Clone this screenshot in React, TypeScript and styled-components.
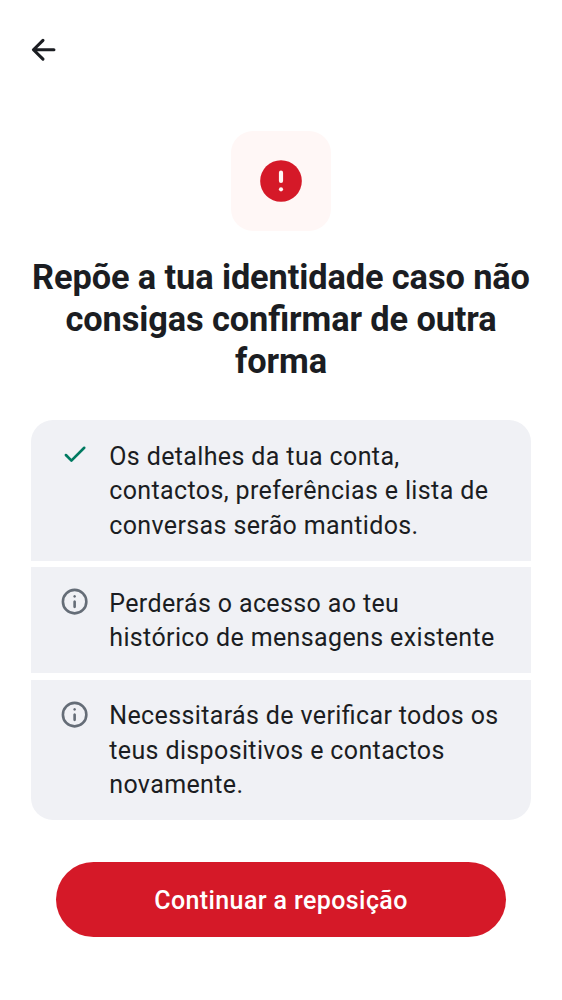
import React from "react";
import styled, { createGlobalStyle } from "styled-components";

const GlobalStyle = createGlobalStyle`
  * { box-sizing: border-box; }
  body { margin: 0; background: #fff; color: #1b1d22; font-family: Roboto, sans-serif; }
`;
const Screen = styled.main`
  width: 562px;
  height: 1000px;
  display: flex;
  flex-direction: column;
  align-items: center;
  background: #fff;
  overflow: hidden;
`;
const TopBar = styled.header`
  width: 100%;
  height: 131px;
  flex: none;
  padding: 31px 0 0 25px;
`;
const BackButton = styled.button`
  display: block;
  width: 37.5px;
  height: 37.5px;
  padding: 0;
  border: 0;
  background: none;
  color: #1b1d22;
`;
const IconTile = styled.div`
  width: 100px;
  height: 100px;
  flex: none;
  border-radius: 22px;
  background: #fff7f6;
  display: grid;
  place-items: center;
`;
const Title = styled.h1`
  margin: 25px 0 0;
  height: 126px;
  flex: none;
  font-size: 34.375px;
  line-height: 42px;
  font-weight: 700;
  letter-spacing: -0.11px;
  font-feature-settings: "liga" 1;
  text-align: center;
  white-space: nowrap;
`;
const List = styled.ul`
  width: 500px;
  flex: none;
  margin: 38.3px 0 0;
  padding: 0;
  list-style: none;
  display: flex;
  flex-direction: column;
  gap: 6.25px;
`;
const Item = styled.li`
  display: flex;
  gap: 19px;
  padding: 19.6px 0 17.9px 28px;
  background: #f0f1f5;
  font-size: 25px;
  line-height: 34.375px;
  letter-spacing: 0.37px;
  font-feature-settings: "liga" 1;
  white-space: nowrap;
  &:first-child { border-radius: 22px 22px 0 0; }
  &:last-child { border-radius: 0 0 22px 22px; }
  svg { flex: none; margin-top: -0.7px; }
`;
const Action = styled.button`
  width: 450px;
  height: 75px;
  flex: none;
  margin-top: 42.2px;
  padding: 1px 0 0;
  border: 0;
  border-radius: 38px;
  background: #d51928;
  color: #fff;
  font: 500 25px Roboto, sans-serif;
  letter-spacing: 0.39px;
`;

const Info = () => (
  <svg width="31.25" height="31.25" viewBox="0 0 24 24" fill="#656d77">
    <path d="M11.29 16.71q.29.29.71.29t.71-.29.29-.71v-4q0-.42-.29-.71A.97.97 0 0 0 12 11a.97.97 0 0 0-.71.29A.97.97 0 0 0 11 12v4q0 .42.29.71m0-8q.29.29.71.29t.71-.29A.97.97 0 0 0 13 8a.97.97 0 0 0-.29-.71A.97.97 0 0 0 12 7a.97.97 0 0 0-.71.29A.97.97 0 0 0 11 8q0 .42.29.71" />
    <path fillRule="evenodd" d="M12 22a10 10 0 1 1 0-20 10 10 0 0 1 0 20m0-2a8 8 0 1 0 0-16 8 8 0 0 0 0 16" />
  </svg>
);
const Check = () => (
  <svg width="31.25" height="31.25" viewBox="0 0 24 24" fill="#007a61">
    <path d="M9.55 17.58q-.2 0-.38-.07a.9.9 0 0 1-.32-.21l-4.28-4.28a.9.9 0 0 1-.27-.71q.01-.44.3-.72a.96.96 0 0 1 .71-.27q.42 0 .72.27l3.52 3.53 9.13-9.13q.27-.27.7-.27.44 0 .72.27.27.28.27.72 0 .43-.27.7L10.25 17.3a.9.9 0 0 1-.7.28" />
  </svg>
);
const Back = () => (
  <svg width="37.5" height="37.5" viewBox="0 0 24 24" fill="none" stroke="currentColor" strokeWidth="2" strokeLinecap="round" strokeLinejoin="round">
    <path d="M18.5 12H6M11.5 6 5.4 12l6.1 6" />
  </svg>
);
const ErrorIcon = () => (
  <svg width="50" height="50" viewBox="0 0 24 24">
    <circle cx="12" cy="12" r="10" fill="#d51928" />
    <path fill="#fff7f6" d="M11 8a1 1 0 0 1 2 0v4a1 1 0 0 1-2 0z" />
    <circle cx="12" cy="16" r="1" fill="#fff7f6" />
  </svg>
);

export default function App() {
  return (
    <>
      <GlobalStyle />
      <Screen>
        <TopBar><BackButton aria-label="Voltar"><Back /></BackButton></TopBar>
        <IconTile><ErrorIcon /></IconTile>
        <Title>Repõe a tua identidade caso não<br />consigas confirmar de outra<br />forma</Title>
        <List>
          <Item><Check /><span>Os detalhes da tua conta,<br />contactos, preferências e lista de<br />conversas serão mantidos.</span></Item>
          <Item><Info /><span>Perderás o acesso ao teu<br />histórico de mensagens existente</span></Item>
          <Item><Info /><span>Necessitarás de verificar todos os<br />teus dispositivos e contactos<br />novamente.</span></Item>
        </List>
        <Action>Continuar a reposição</Action>
      </Screen>
    </>
  );
}
